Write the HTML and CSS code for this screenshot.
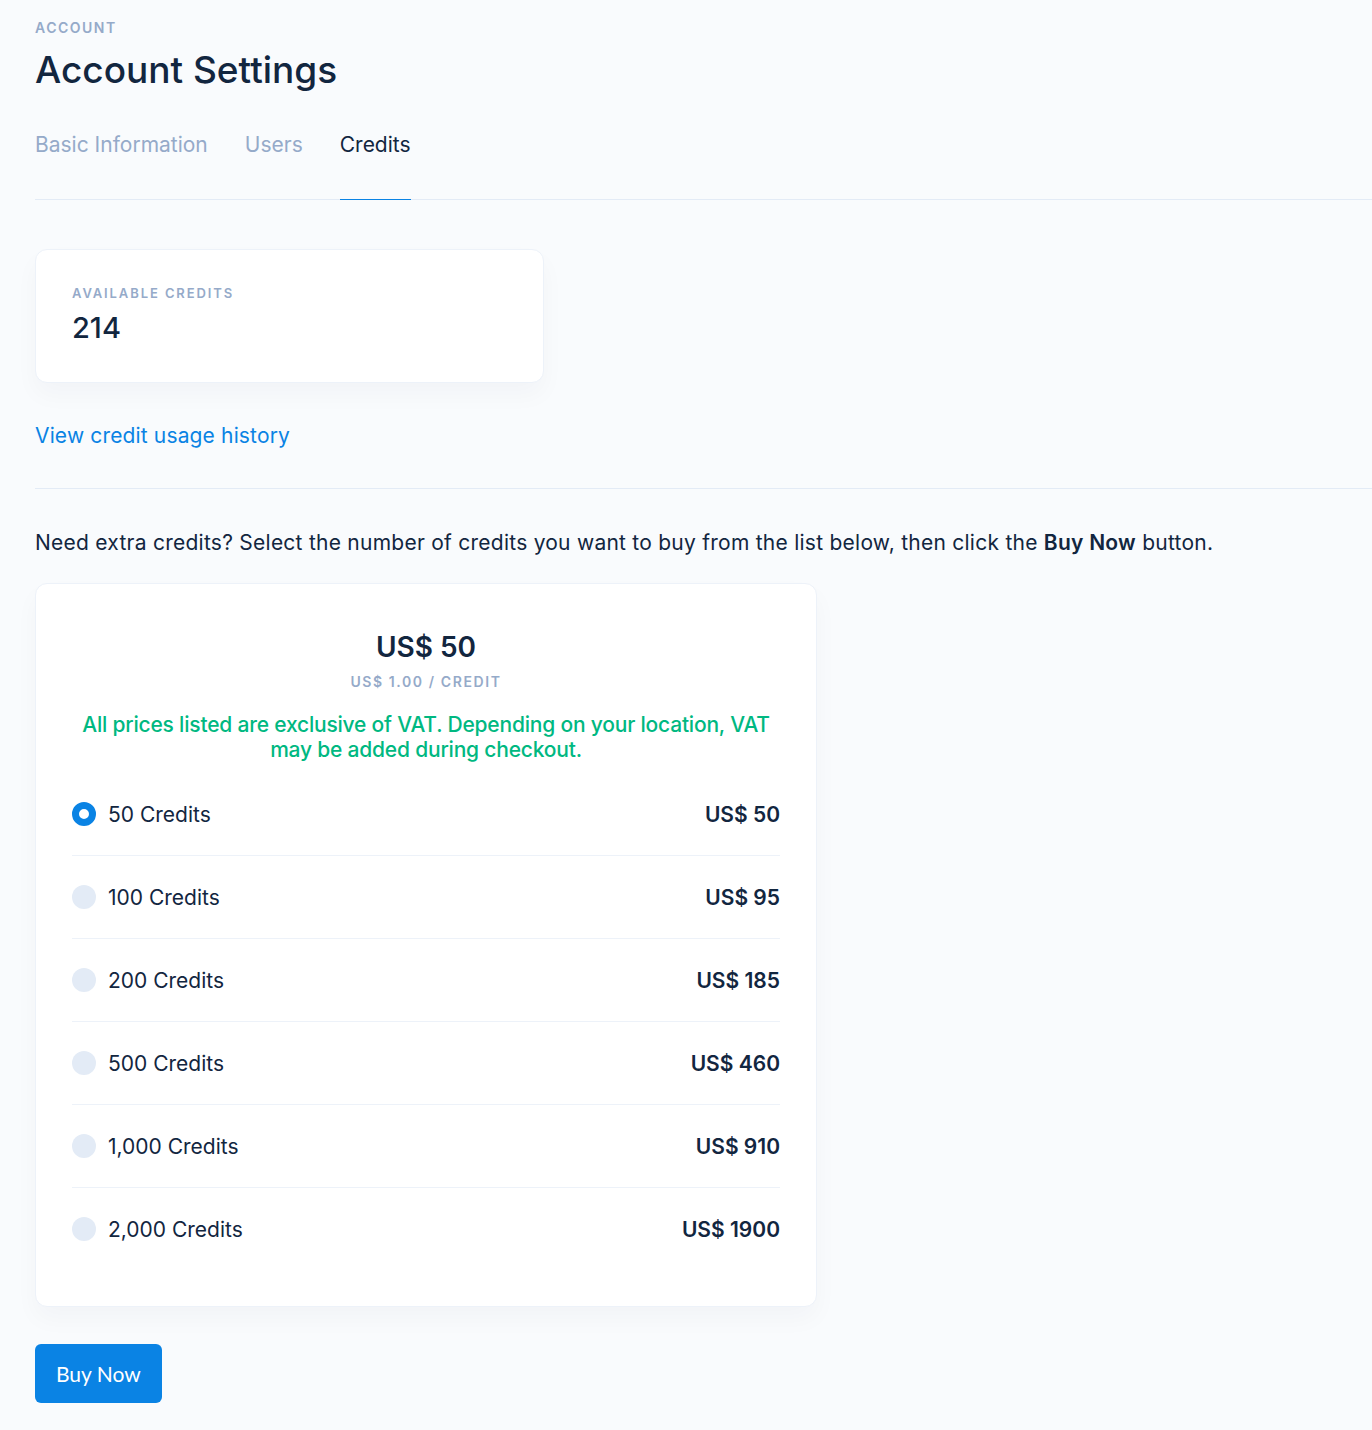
FILE: index.html
```html
<!DOCTYPE html>
<html lang="en">
<head>
    <meta charset="UTF-8">
    <meta name="viewport" content="width=device-width, initial-scale=1.0">
    <title>Account Settings</title>
    <link rel="stylesheet" href="styles.css">
</head>
<body>
    <div class="page">
        <div class="header">
            <div class="pretitle">Account</div>
            <h1>Account Settings</h1>
            <div class="tabs">
                <a class="tab" href="#">Basic Information</a>
                <a class="tab" href="#">Users</a>
                <a class="tab active" href="#">Credits</a>
            </div>
        </div>

        <div class="balance-card">
            <div class="label">Available Credits</div>
            <div class="balance">214</div>
        </div>

        <a class="history-link" href="#">View credit usage history</a>

        <hr class="divider">

        <p class="intro">Need extra credits? Select the number of credits you want to buy from the list below, then click the <strong>Buy Now</strong> button.</p>

        <div class="pricing-card">
            <div class="total">US$ 50</div>
            <div class="per-credit">US$ 1.00 / Credit</div>
            <p class="vat-note">All prices listed are exclusive of VAT. Depending on your location, VAT may be added during checkout.</p>

            <!-- Credit packages -->
            <ul class="packages">
                <li class="package selected"><span class="radio"></span><span class="name">50 Credits</span><span class="price">US$ 50</span></li>
                <li class="package"><span class="radio"></span><span class="name">100 Credits</span><span class="price">US$ 95</span></li>
                <li class="package"><span class="radio"></span><span class="name">200 Credits</span><span class="price">US$ 185</span></li>
                <li class="package"><span class="radio"></span><span class="name">500 Credits</span><span class="price">US$ 460</span></li>
                <li class="package"><span class="radio"></span><span class="name">1,000 Credits</span><span class="price">US$ 910</span></li>
                <li class="package"><span class="radio"></span><span class="name">2,000 Credits</span><span class="price">US$ 1900</span></li>
            </ul>
        </div>

        <button class="buy-btn">Buy Now</button>
    </div>
</body>
</html>
```

FILE: styles.css
```css
body {
    margin: 0;
    background-color: #f9fbfd;
    font-family: 'Inter', 'Lato', sans-serif;
    color: #12263f;
}
.page {
    padding: 18px 0 28px 35px;
}
.pretitle {
    font-size: 14px;
    font-weight: 600;
    letter-spacing: 1.5px;
    text-transform: uppercase;
    color: #95aac9;
    line-height: 20px;
}
h1 {
    margin: 8px 0 0;
    font-size: 37px;
    font-weight: 500;
    line-height: 48px;
    color: #12263f;
}
.tabs {
    display: flex;
    gap: 37px;
    margin-top: 30px;
    border-bottom: 1px solid #e3ebf6;
}
.tab {
    font-size: 21px;
    line-height: 24px;
    color: #95aac9;
    text-decoration: none;
    padding: 9px 0 42px;
    margin-bottom: -1px;
    border-bottom: 1px solid transparent;
}
.tab.active {
    color: #12263f;
    border-bottom-color: #0a83e4;
}
.balance-card {
    width: 509px;
    margin-top: 49px;
    box-sizing: border-box;
    padding: 34px 36px 36px;
    background-color: #fff;
    border: 1px solid #edf2f9;
    border-radius: 12px;
    box-shadow: 0 12px 24px rgba(18, 38, 63, 0.03);
}
.label {
    font-size: 13px;
    font-weight: 600;
    letter-spacing: 1.9px;
    text-transform: uppercase;
    color: #95aac9;
    line-height: 18px;
}
.balance {
    margin-top: 8px;
    font-size: 29px;
    font-weight: 500;
    line-height: 36px;
}
.history-link {
    display: inline-block;
    margin-top: 37px;
    font-size: 21px;
    letter-spacing: 0.15px;
    line-height: 32px;
    color: #0a83e4;
    text-decoration: none;
}
.divider {
    margin: 36px 0 0;
    border: 0;
    border-top: 1px solid #e3ebf6;
}
.intro {
    margin: 38px 0 0;
    font-size: 21px;
    letter-spacing: 0.25px;
    line-height: 32px;
}
.intro strong {
    font-weight: 600;
}
.pricing-card {
    width: 782px;
    margin-top: 24px;
    box-sizing: border-box;
    padding: 45px 36px 36px;
    background-color: #fff;
    border: 1px solid #edf2f9;
    border-radius: 12px;
    box-shadow: 0 12px 24px rgba(18, 38, 63, 0.03);
    text-align: center;
}
.total {
    font-size: 28px;
    font-weight: 600;
    line-height: 36px;
}
.per-credit {
    margin-top: 8px;
    font-size: 14px;
    font-weight: 600;
    letter-spacing: 1.6px;
    text-transform: uppercase;
    color: #95aac9;
}
.vat-note {
    margin: 22px 0 0;
    font-size: 21px;
    line-height: 25px;
    color: #00b881;
    letter-spacing: -0.2px;
    font-weight: 500;
}
.packages {
    list-style: none;
    margin: 11px 0 0;
    padding: 0;
    text-align: left;
}
.package {
    display: flex;
    align-items: center;
    height: 82px;
    font-size: 21px;
    border-bottom: 1px solid #edf2f9;
}
.package:last-child {
    border-bottom: none;
}
.radio {
    width: 24px;
    height: 24px;
    border-radius: 50%;
    background-color: #e3ebf6;
    margin-right: 12px;
    box-sizing: border-box;
}
.package.selected .radio {
    background-color: #fff;
    border: 7px solid #0a83e4;
}
.name {
    flex: 1;
}
.price {
    font-weight: 600;
}
.buy-btn {
    margin-top: 37px;
    padding: 0 21px;
    height: 59px;
    font-family: 'Lato', sans-serif;
    font-size: 21px;
    color: #fff;
    background-color: #0a83e4;
    border: none;
    border-radius: 6px;
    cursor: pointer;
}
```
